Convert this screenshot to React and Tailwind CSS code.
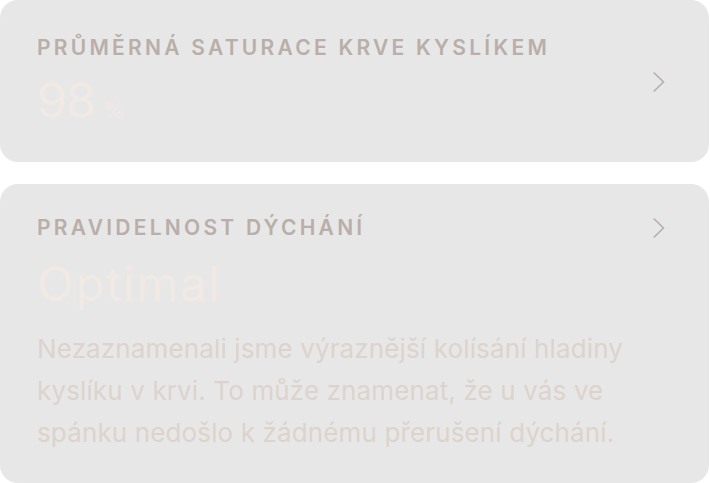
import React from "react";

function Chevron() {
  return (
    <svg width="12" height="20" viewBox="0 0 12 20" fill="none" className="shrink-0">
      <path d="M1.2 1 L10.5 10 L1.2 19" stroke="#b9aea9" strokeWidth="1.7" strokeLinecap="round" strokeLinejoin="round" />
    </svg>
  );
}

function Label({ children }) {
  return (
    <div className="text-[21px] leading-[24px] font-semibold tracking-[0.155em] text-[#b9aea9] uppercase">
      {children}
    </div>
  );
}

export default function App() {
  return (
    <div className="w-[710px] h-[483px] bg-white flex flex-col gap-[22px] font-['Inter',sans-serif]">
      <div className="w-[709px] h-[162px] rounded-[18px] bg-[#e7e7e7] pl-[37px] pr-[44px] pt-[36px] flex">
        <div className="flex-1 flex flex-col">
          <Label>Průměrná saturace krve kyslíkem</Label>
          <div className="flex items-baseline mt-[16px]">
            <span className="text-[49px] leading-[50px] text-[#f1e9e4] tracking-[-0.03em]">98</span>
            <span className="text-[22px] leading-[22px] text-[#f1e9e4] ml-[9px]">%</span>
          </div>
        </div>
        <div className="pt-[36px]">
          <Chevron />
        </div>
      </div>

      <div className="w-[709px] h-[299px] rounded-[18px] bg-[#e7e7e7] pl-[37px] pr-[44px] pt-[32px] flex flex-col">
        <div className="flex items-center">
          <div className="flex-1">
            <Label>Pravidelnost dýchání</Label>
          </div>
          <Chevron />
        </div>
        <div className="text-[48px] leading-[56px] text-[#f1e9e4] mt-[16px] tracking-[0.03em]">Optimal</div>
        <p className="text-[26px] leading-[42px] text-[#ddd3cd] mt-[16px] tracking-[0.005em] w-[640px]">
          Nezaznamenali jsme výraznější kolísání hladiny kyslíku v krvi. To může znamenat, že u vás ve spánku nedošlo k žádnému přerušení dýchání.
        </p>
      </div>
    </div>
  );
}
